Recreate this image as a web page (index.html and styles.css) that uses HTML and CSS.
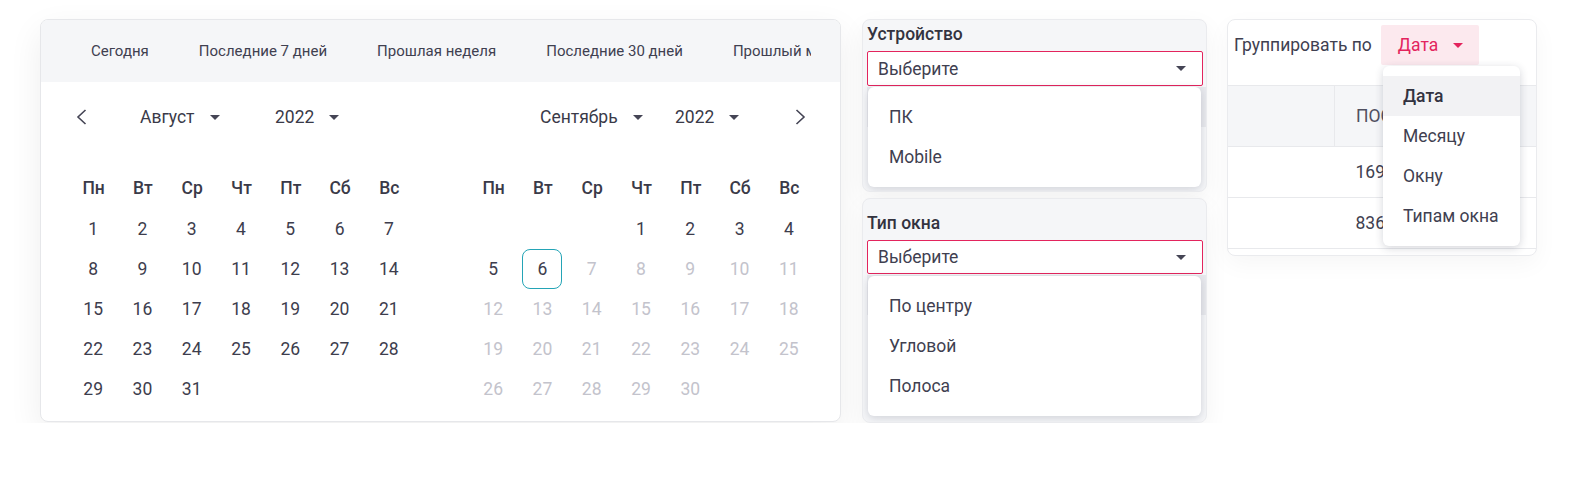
FILE: index.html
```html
<!DOCTYPE html>
<html lang="ru">
<head>
<meta charset="utf-8">
<title>Статистика</title>
<link rel="stylesheet" href="styles.css">
</head>
<body>
<div class="page">

  <div class="cal">
    <div class="presets">
      <div class="presets-in">
        <span>Сегодня</span><span>Последние 7 дней</span><span>Прошлая неделя</span><span>Последние 30 дней</span><span>Прошлый месяц</span>
      </div>
    </div>
    <div class="months">
      <div class="month m-left">
        <div class="nav">
          <span class="slot"><svg class="chev" width="11" height="16" viewBox="0 0 11 16"><path d="M9.5 1L2 8l7.5 7" fill="none" stroke="#454555" stroke-width="1.6"/></svg></span>
          <span class="sel msel">Август<i class="caret"></i></span>
          <span class="sel">2022<i class="caret"></i></span>
        </div>
        <div class="grid">
          <b>Пн</b><b>Вт</b><b>Ср</b><b>Чт</b><b>Пт</b><b>Сб</b><b>Вс</b>
          <span>1</span><span>2</span><span>3</span><span>4</span><span>5</span><span>6</span><span>7</span>
          <span>8</span><span>9</span><span>10</span><span>11</span><span>12</span><span>13</span><span>14</span>
          <span>15</span><span>16</span><span>17</span><span>18</span><span>19</span><span>20</span><span>21</span>
          <span>22</span><span>23</span><span>24</span><span>25</span><span>26</span><span>27</span><span>28</span>
          <span>29</span><span>30</span><span>31</span>
        </div>
      </div>
      <div class="month m-right">
        <div class="nav">
          <span class="slot"></span>
          <span class="sel msel">Сентябрь<i class="caret"></i></span>
          <span class="sel">2022<i class="caret"></i></span>
          <span class="next"><svg class="chev" width="11" height="16" viewBox="0 0 11 16"><path d="M1.5 1L9 8l-7.5 7" fill="none" stroke="#454555" stroke-width="1.6"/></svg></span>
        </div>
        <div class="grid">
          <b>Пн</b><b>Вт</b><b>Ср</b><b>Чт</b><b>Пт</b><b>Сб</b><b>Вс</b>
          <span></span><span></span><span></span><span>1</span><span>2</span><span>3</span><span>4</span>
          <span>5</span><span><em class="today">6</em></span><span class="off">7</span><span class="off">8</span><span class="off">9</span><span class="off">10</span><span class="off">11</span>
          <span class="off">12</span><span class="off">13</span><span class="off">14</span><span class="off">15</span><span class="off">16</span><span class="off">17</span><span class="off">18</span>
          <span class="off">19</span><span class="off">20</span><span class="off">21</span><span class="off">22</span><span class="off">23</span><span class="off">24</span><span class="off">25</span>
          <span class="off">26</span><span class="off">27</span><span class="off">28</span><span class="off">29</span><span class="off">30</span>
        </div>
      </div>
    </div>
  </div>

  <div class="filters">
    <div class="panel p1">
      <div class="lbl">Устройство</div>
      <div class="select">Выберите<i class="caret"></i></div>
      <div class="under"><div class="under-head"></div></div>
      <ul class="menu">
        <li>ПК</li>
        <li>Mobile</li>
      </ul>
    </div>
    <div class="panel p2">
      <div class="lbl">Тип окна</div>
      <div class="select">Выберите<i class="caret"></i></div>
      <div class="under"><div class="under-head"></div></div>
      <ul class="menu">
        <li>По центру</li>
        <li>Угловой</li>
        <li>Полоса</li>
      </ul>
    </div>
  </div>

  <div class="group">
    <div class="group-top">
      <span>Группировать по</span>
      <span class="gbtn">Дата<i class="caret red"></i></span>
    </div>
    <div class="tbl-wrap">
      <table class="tbl">
        <tr><th></th><th>ПОСЕЩЕНИЯ</th></tr>
        <tr><td></td><td>16945</td></tr>
        <tr><td></td><td>8362</td></tr>
      </table>
    </div>
    <ul class="gmenu">
      <li class="act">Дата</li>
      <li>Месяцу</li>
      <li>Окну</li>
      <li>Типам окна</li>
    </ul>
  </div>

</div>
</body>
</html>
```

FILE: styles.css
```css
html{font-family:Roboto,"Noto Sans",Arial,sans-serif;color:#3d3d4d}
body{margin:0;padding:19px 0 0 40px;background:#fff}
.page{display:flex;align-items:flex-start;font-size:17.5px}
.page > div{flex:none}

.caret{display:inline-block;width:0;height:0;border-left:5px solid transparent;border-right:5px solid transparent;border-top:5px solid #454555;margin-left:15px}
.caret.red{border-top-color:#e3245d}

/* calendar */
.cal{width:801px;height:403px;box-sizing:border-box;border:1px solid #e6e7ea;border-radius:8px;background:#fff;box-shadow:0 12px 34px rgba(0,0,0,.07);overflow:hidden}
.presets{background:#f5f6f8;height:62px;padding:0 29px 0 25px;display:flex;align-items:center}
.presets-in{display:flex;overflow:hidden;white-space:nowrap;font-size:15px;color:#404050;width:100%}
.presets-in span{padding:0 25px;flex:none}
.months{display:flex;gap:55px;padding:0 26px 0 28px}
.month{width:345px;flex:none}
.nav{height:70px;display:flex;align-items:center;margin-bottom:17px;color:#3a3a48}
.slot{width:71px;flex:none;display:flex}
.slot .chev{margin-left:7px}
.sel{display:flex;align-items:center;flex:none}
.msel{width:135px}
.next{margin-left:auto;margin-right:8px;display:flex}
.grid{display:grid;grid-template-columns:repeat(7,1fr);grid-auto-rows:40px}
.grid b{font-weight:500;height:37px;display:flex;align-items:center;justify-content:center;color:#3a3a48}
.grid span{display:flex;align-items:center;justify-content:center;padding-right:1px;color:#3d3d4d}
.grid .off{color:#c3c3cc}
.grid .today{font-style:normal;width:40px;height:40px;box-sizing:border-box;border:1px solid #24a4b6;border-radius:8px;display:flex;align-items:center;justify-content:center}

/* filters */
.filters{margin-left:21px;width:345px;display:flex;flex-direction:column;gap:6px}
.panel{background:#f5f6f8;border:1px solid #eaebee;border-radius:8px;box-shadow:0 8px 24px rgba(0,0,0,.05);padding:0 3px 0 4px;box-sizing:border-box;position:relative;overflow:hidden}
.p1{height:173px;padding-top:4px}
.p2{height:225px;padding-top:14px}
.lbl{font-weight:500;line-height:20px;color:#333340;margin-bottom:7px}
.select{height:35px;box-sizing:border-box;border:1px solid #e3245d;border-radius:2px;background:#fff;display:flex;align-items:center;justify-content:space-between;padding:0 16px 0 10px;color:#404050}
.p2 .select{height:34px}
.under{margin:1px -3px 0 0}
.under-head{height:40px;background:#e8e9ed}
.menu{position:absolute;left:5px;width:333px;list-style:none;margin:0;padding:10px 0;background:#fff;border-radius:6px;box-shadow:0 2px 8px rgba(40,45,70,.18)}
.p1 .menu{top:67px}
.p2 .menu{top:77px}
.menu li{height:40px;line-height:40px;padding-left:21px;color:#404050}

/* group */
.group{margin-left:20px;width:310px;height:237px;box-sizing:border-box;border:1px solid #eaebee;border-radius:8px;background:#fff;box-shadow:0 8px 24px rgba(0,0,0,.04);position:relative}
.group-top{height:65px;display:flex;align-items:flex-start;padding:5px 0 0 6px;box-sizing:border-box}
.group-top > span:first-child{line-height:40px;color:#404050}
.gbtn{margin-left:9px;width:98px;height:40px;box-sizing:border-box;background:#fce9ee;color:#e3245d;display:flex;align-items:center;padding-left:17px;border-radius:2px}
.tbl-wrap{overflow:hidden}
.tbl{border-collapse:collapse;width:100%;font-size:17.5px}
.tbl th{background:#f5f6f8;height:60px;font-weight:400;text-align:left;padding:0 0 0 21px;border-top:1px solid #e8e9ec;border-bottom:1px solid #e8e9ec;color:#505060}
.tbl th:first-child{width:85px;border-right:1px solid #e8e9ec}
.tbl td{height:50px;padding:0 0 0 21px;border-bottom:1px solid #e8e9ec;color:#404050}
.gmenu{position:absolute;left:155px;top:46px;width:137px;margin:0;list-style:none;padding:10px 0;background:#fff;border-radius:6px;box-shadow:0 2px 8px rgba(40,45,70,.2)}
.gmenu li{height:40px;line-height:40px;padding-left:20px;color:#404050}
.gmenu li.act{background:#f2f2f4;font-weight:500;color:#333340}
```
